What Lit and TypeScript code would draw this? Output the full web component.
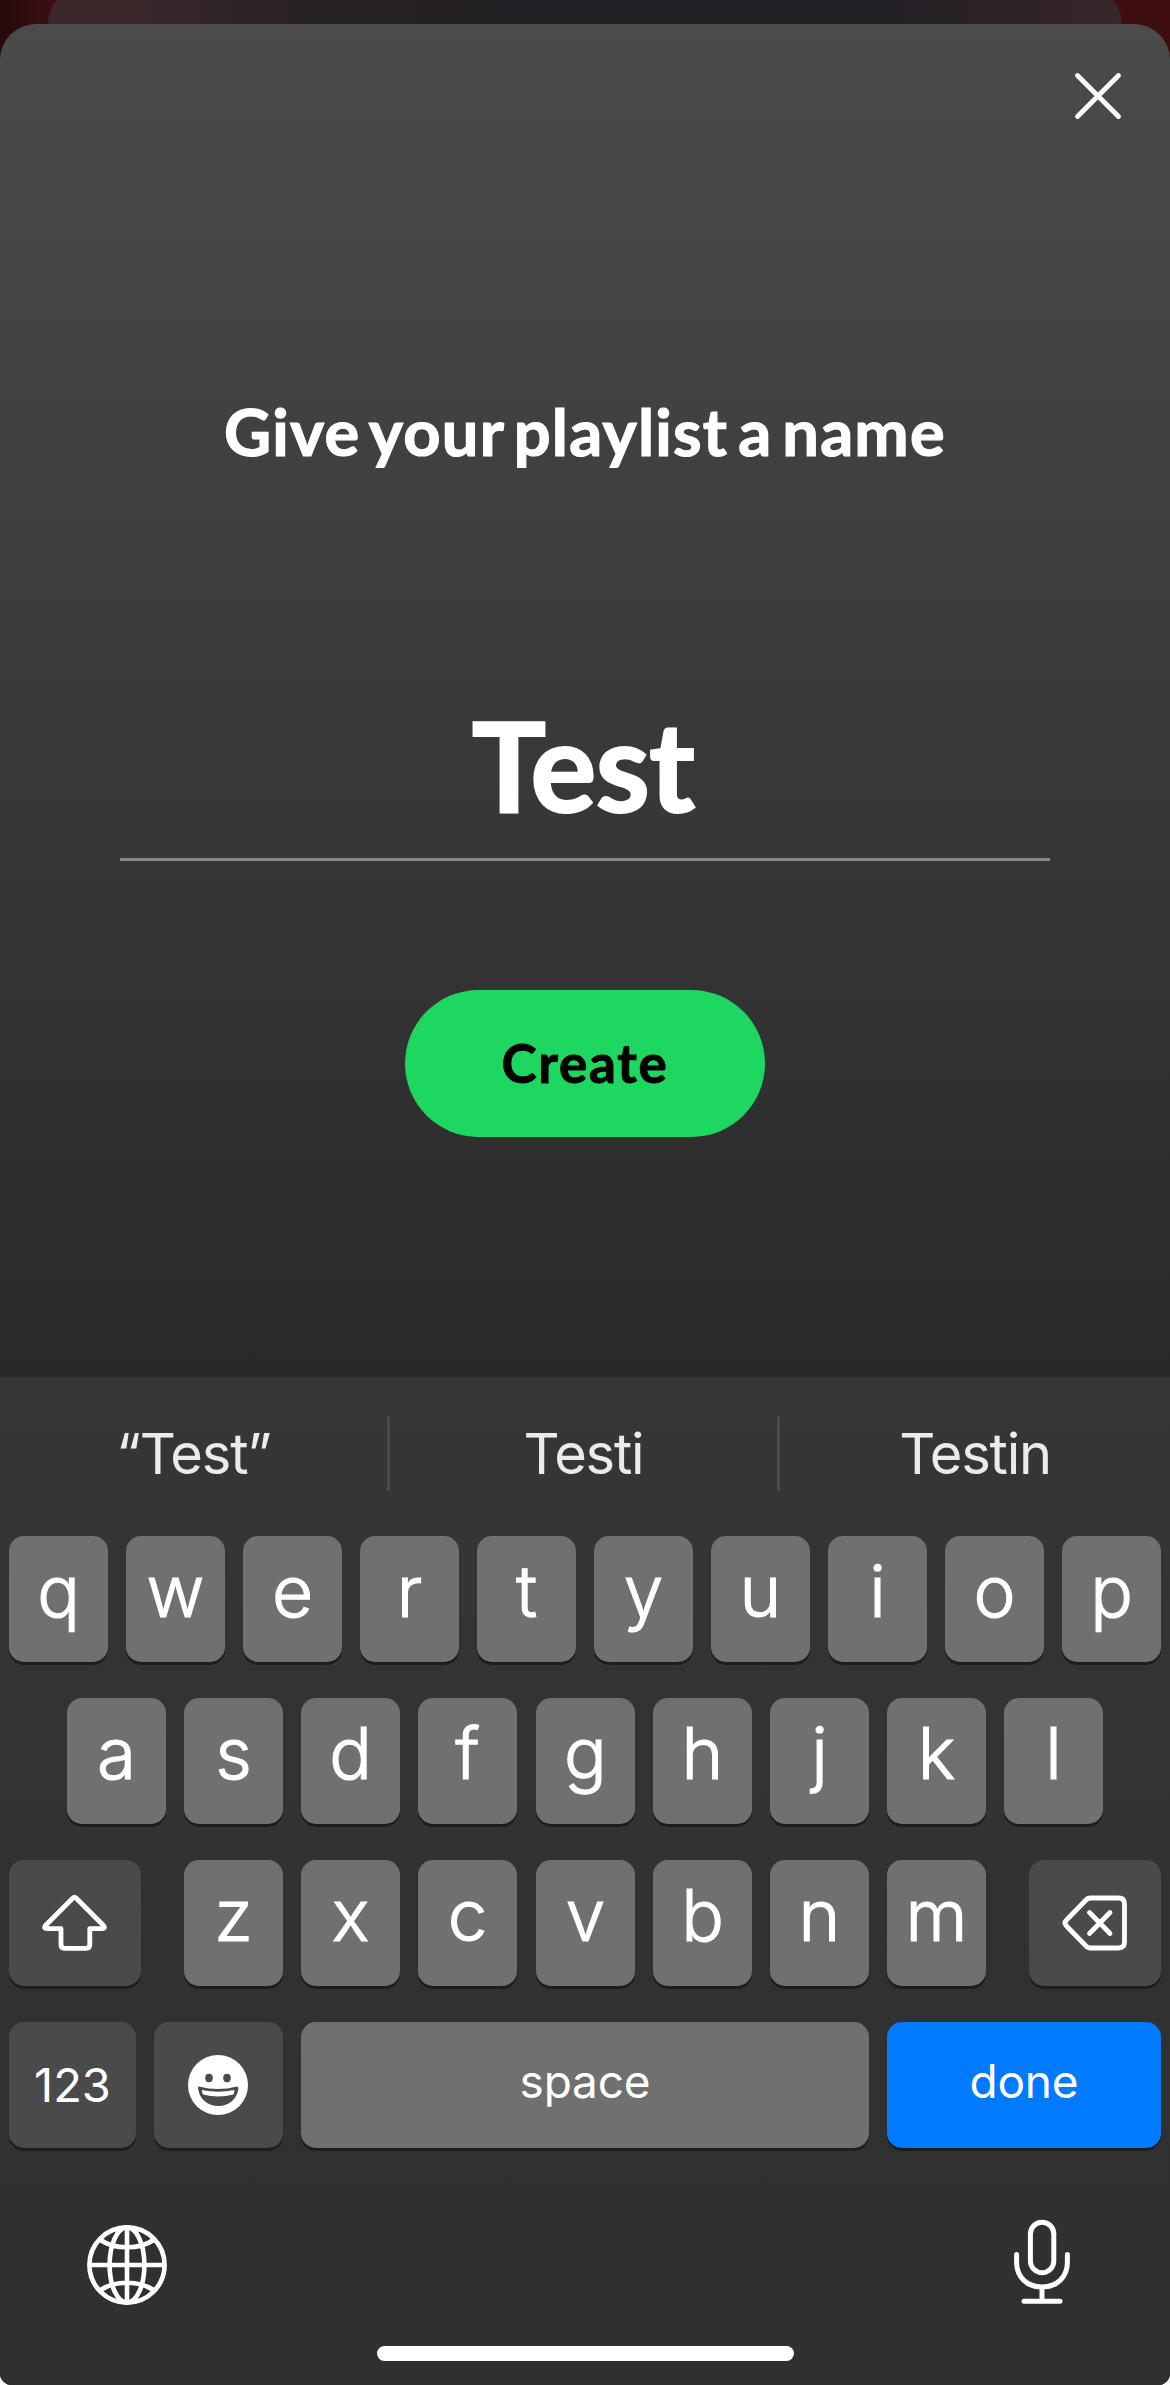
import { LitElement, html, css, svg } from "lit";
import { customElement, property } from "lit/decorators.js";

const icons = {
  close: svg`<svg width="52" height="52" viewBox="0 0 52 52" fill="none" stroke="#fff" stroke-width="4.800" stroke-linecap="round"><path d="M5.500 5.500L46.500 46.500M46.500 5.500L5.500 46.500"/></svg>`,
  shift: svg`<svg width="66" height="58" viewBox="0.500 0 66 58" fill="none" stroke="#fff" stroke-width="4.800" stroke-linejoin="round"><path d="M31.200 4.200Q33 2.500 34.800 4.200L62 31.500Q64.200 34.500 61 34.600H48.300V50.500Q48.300 54.300 44.500 54.300H23Q19.500 54.300 19.500 50.500V34.600H5Q1.800 34.500 4 31.500Z"/></svg>`,
  erase: svg`<svg width="66" height="58" viewBox="0 -1 66 58" fill="none" stroke="#fff" stroke-width="4.800" stroke-linejoin="round" stroke-linecap="round"><path d="M28.500 3H56.500Q62.500 3 62.500 9V47Q62.500 53 56.500 53H28.500Q25.500 53 23.500 50.500L4.500 31Q1.500 28 4.500 25L23.500 5.500Q25.500 3 28.500 3Z"/><path d="M27.500 17.500L48 38.500M48 17.500L27.500 38.500"/></svg>`,
  emoji: svg`<svg width="61" height="60" viewBox="0 0 61 60"><circle cx="30" cy="30" r="30" fill="#fff"/><ellipse cx="21" cy="23" rx="3.800" ry="4.200" fill="#4a4a4a"/><ellipse cx="39" cy="23" rx="3.800" ry="4.200" fill="#4a4a4a"/><path d="M11 31.500Q30 36.500 49 31.500Q50.500 31.500 50.500 33.500C49 44 41 51 30.300 51S11.500 44 10 33.500Q9.800 31.500 11 31.500Z" fill="#4a4a4a"/><path d="M13.800 35Q30 38.500 46.500 35Q46.500 37 45.500 39.500Q30 43.500 15 39.500Q13.800 37 13.800 35Z" fill="#fff"/></svg>`,
  globe: svg`<svg width="80" height="80" viewBox="0 0 80 80" fill="none" stroke="#fff" stroke-width="4.600"><circle cx="40" cy="40" r="37.600"/><ellipse cx="40" cy="40" rx="17.400" ry="37.600"/><path d="M40 2V78M2.500 40H77.500M13.500 15Q24 22.300 40 22.300T66.500 15M13.500 65Q24 57.700 40 57.700T66.500 65"/></svg>`,
  mic: svg`<svg width="56" height="86" viewBox="0 0 56 86" fill="none" stroke="#fff" stroke-width="5" stroke-linecap="round"><rect x="16.400" y="3.200" width="23.400" height="50.500" rx="11.700"/><path d="M2.600 35.500V43C2.600 58 12.800 68 28 68S53.400 58 53.400 43V35.500M28 68V81M10 82.300H46"/></svg>`,
};

type IconName = keyof typeof icons;

@customElement("kb-key")
class KbKey extends LitElement {
  @property() label = "";
  @property() icon = "";
  @property({ reflect: true }) kind = "letter";

  static styles = css`
    :host {
      display: flex;
      flex: none;
      box-sizing: border-box;
      justify-content: center;
      width: 99px;
      height: 126px;
      border-radius: 15px;
      background: #707070;
      box-shadow: 0 3px 0 #1d1d1d;
      color: #fff;
      font-family: Inter, "Liberation Sans", sans-serif;
      font-weight: 300;
    }
    :host([kind="shift"]), :host([kind="erase"]) { width: 132px; background: #4a4a4a; align-items: center; }
    :host([kind="numbers"]) { width: 127px; background: #4a4a4a; }
    :host([kind="emoji"]) { width: 129px; background: #4a4a4a; align-items: center; }
    :host([kind="space"]) { width: 568px; }
    :host([kind="done"]) { width: 274px; background: #007aff; }
    .text { line-height: 110px; font-size: 71px; -webkit-text-stroke: 1.200px #fff; }
    .small { font-size: 46px; line-height: 118px; font-weight: 400; letter-spacing: -0.200px; -webkit-text-stroke: 0; }
    .digits { font-size: 47px; line-height: 126px; font-weight: 400; letter-spacing: 0; -webkit-text-stroke: 0; }
    svg { display: block; }
  `;

  render() {
    if (this.icon) return icons[this.icon as IconName];
    const size = this.kind === "letter" ? "" : this.kind === "numbers" ? "digits" : "small";
    return html`<span class="text ${size}">${this.label}</span>`;
  }
}

@customElement("soft-keyboard")
class SoftKeyboard extends LitElement {
  static styles = css`
    :host {
      display: flex;
      flex-direction: column;
      height: 1008px;
      background: linear-gradient(#363636, #313131 60%, #303030);
      font-family: Inter, "Liberation Sans", sans-serif;
      font-weight: 400;
    }
    .suggestions { display: grid; grid-template-columns: 387px 3px 387px 3px 390px; align-items: start; height: 75px; padding: 39px 0 45px; color: #ebebeb; }
    .word { text-align: center; font-size: 56px; line-height: 77px; letter-spacing: -1.200px; }
    .rule { width: 3px; height: 75px; border-radius: 2px; background: #4a4a4a; }
    .rows { display: flex; flex-direction: column; gap: 36px; padding: 0 9px; }
    .row { display: flex; justify-content: center; gap: 18px; }
    .spread { justify-content: space-between; gap: 0; }
    .home-row kb-key:nth-child(5), .bottom-row kb-key:nth-child(4) { margin-left: 1px; }
    .tools { display: flex; justify-content: space-between; align-items: flex-end; padding: 71px 100px 0 87px; }
    .home { width: 417px; height: 15px; margin: 41px auto 0; border-radius: 8px; background: #fff; }
    svg { display: block; }
  `;

  private letters(keys: string) {
    return [...keys].map((k) => html`<kb-key label=${k}></kb-key>`);
  }

  render() {
    return html`
      <div class="suggestions">
        <span class="word">“Test”</span><span class="rule"></span>
        <span class="word">Testi</span><span class="rule"></span>
        <span class="word">Testin</span>
      </div>
      <div class="rows">
        <div class="row">${this.letters("qwertyuiop")}</div>
        <div class="row home-row">${this.letters("asdfghjkl")}</div>
        <div class="row spread">
          <kb-key kind="shift" icon="shift"></kb-key>
          <div class="row bottom-row">${this.letters("zxcvbnm")}</div>
          <kb-key kind="erase" icon="erase"></kb-key>
        </div>
        <div class="row spread">
          <kb-key kind="numbers" label="123"></kb-key>
          <kb-key kind="emoji" icon="emoji"></kb-key>
          <kb-key kind="space" label="space"></kb-key>
          <kb-key kind="done" label="done"></kb-key>
        </div>
      </div>
      <div class="tools">${icons.globe}${icons.mic}</div>
      <div class="home"></div>
    `;
  }
}

@customElement("app-root")
class AppRoot extends LitElement {
  static styles = css`
    :host { display: block; width: 1170px; height: 2385px; overflow: hidden; background: #fff; }
    .screen {
      display: flex;
      flex-direction: column;
      height: 2385px;
      overflow: hidden;
      border-radius: 0 0 12px 12px;
      background: linear-gradient(90deg, #260a0c, #3e0e11 5%, #3e0e11);
    }
    .behind {
      flex: none;
      height: 76px;
      margin: -12px 48px -40px;
      border-radius: 36px 36px 0 0;
      background: linear-gradient(90deg, #3c282a, #3a272a 7%, #282124 24%, #222024 45%, #202026 75%, #2c2225 88%, #38262a);
    }
    .sheet {
      display: flex;
      flex: 1;
      flex-direction: column;
      align-items: center;
      border-radius: 36px 36px 0 0;
      background: linear-gradient(#4b4b4b, #292929 1353px);
      color: #fff;
      font-family: Lato, "Open Sans", sans-serif;
      font-weight: 700;
    }
    .close { align-self: flex-end; margin: 46px 46px 0 0; }
    .close svg { display: block; }
    .title { margin: 270px 0 0; font-size: 65px; line-height: 79px; padding-bottom: 1px; font-weight: 700; letter-spacing: 1.200px; word-spacing: -7px; white-space: nowrap; -webkit-text-stroke: 1.200px #fff; }
    .name { box-sizing: border-box; width: 930px; height: 173px; margin-top: 216px; padding: 1px 4px 0 0; border-bottom: 3px solid #888; text-align: center; font-size: 124px; line-height: 150px; letter-spacing: -1px; -webkit-text-stroke: 2px #fff; }
    .create { width: 360px; height: 147px; margin-top: 129px; border-radius: 74px; background: #1ed760; color: #000; text-align: center; font-size: 53px; line-height: 145px; letter-spacing: 1.700px; -webkit-text-stroke: 1px #000; }
    soft-keyboard { flex: none; align-self: stretch; margin-top: auto; }
  `;

  render() {
    return html`
      <div class="screen">
        <div class="behind"></div>
        <main class="sheet">
          <div class="close">${icons.close}</div>
          <h1 class="title">Give your playlist a name</h1>
          <div class="name">Test</div>
          <div class="create">Create</div>
          <soft-keyboard></soft-keyboard>
        </main>
      </div>
    `;
  }
}
